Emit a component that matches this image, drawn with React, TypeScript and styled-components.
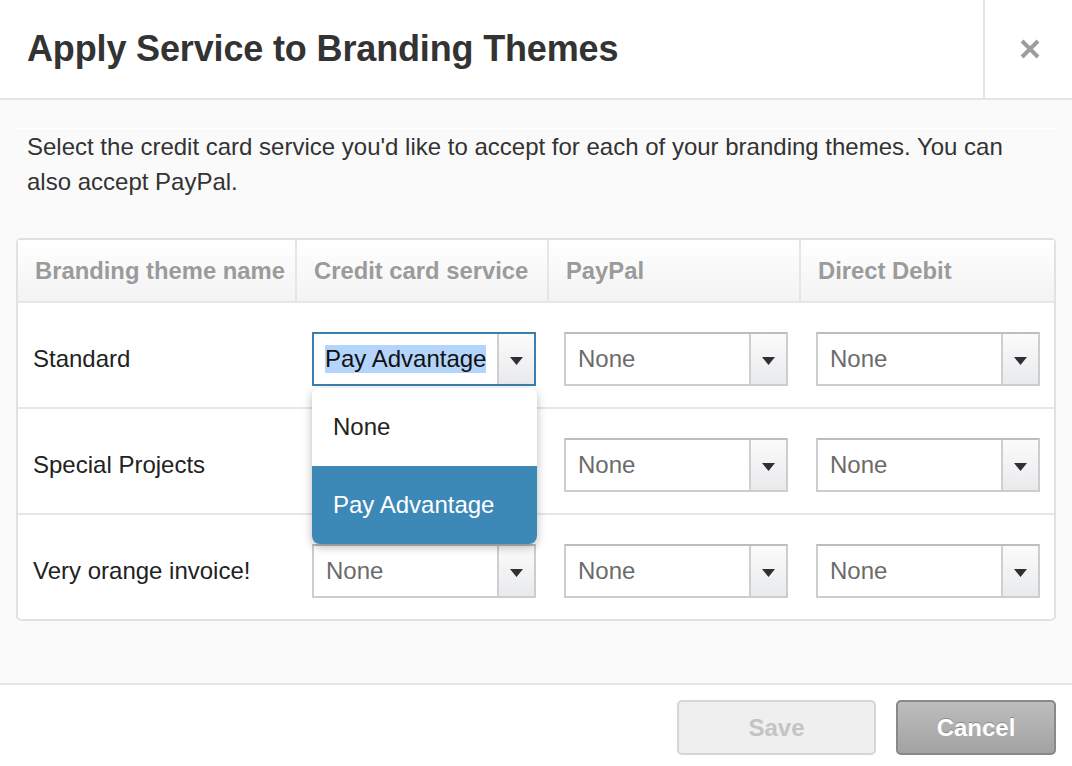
import React from "react";
import styled, { createGlobalStyle } from "styled-components";

const Global = createGlobalStyle`
  html, body { margin: 0; padding: 0; background: #ffffff; }
  body { font-family: "Liberation Sans", Arial, Helvetica, sans-serif; }
  * { box-sizing: border-box; }
`;

const Modal = styled.div`
  width: 1072px;
  height: 766px;
  display: flex;
  flex-direction: column;
  background: #fafafa;
`;

const Header = styled.div`
  height: 100px;
  display: flex;
  background: #fff;
  border-bottom: 2px solid #e4e4e4;
`;

const Title = styled.h1`
  flex: 1;
  margin: 0;
  padding: 0 0 0 27px;
  font-size: 36px;
  font-weight: 700;
  color: #333;
  line-height: 98px;
  letter-spacing: -0.15px;
`;

const CloseCell = styled.div`
  width: 89px;
  border-left: 2px solid #e4e4e4;
  display: flex;
  align-items: center;
  justify-content: center;
  padding-left: 2px;
`;

const Body = styled.div`
  flex: 1;
  padding: 28px 16px 0 16px;
`;

const Description = styled.p`
  margin: 0 0 39px 0;
  padding: 0 40px 0 11px;
  border-top: 1px solid #ffffff;
  font-size: 24px;
  line-height: 35px;
  color: #333;
`;

const TableBox = styled.div`
  border: 2px solid #e1e1e1;
  border-radius: 5px;
  background: #fff;
`;

const Grid = styled.div`
  display: grid;
  grid-template-columns: 279px 252px 252px 1fr;
`;

const HeadCell = styled.div<{ $last?: boolean }>`
  height: 63px;
  display: flex;
  align-items: center;
  padding: 0 0 0 17px;
  background: linear-gradient(#ffffff, #f3f3f3);
  border-bottom: 2px solid #e6e6e6;
  border-right: ${(p) => (p.$last ? "none" : "2px solid #e6e6e6")};
  font-size: 23.8px;
  font-weight: 700;
  color: #9b9b9b;
  white-space: nowrap;
`;

const Cell = styled.div<{ $last?: boolean }>`
  position: relative;
  height: ${(p) => (p.$last ? "104px" : "106px")};
  display: flex;
  align-items: center;
  padding: 8px 0 0 15px;
  border-bottom: ${(p) => (p.$last ? "none" : "2px solid #e6e6e6")};
  font-size: 24px;
  color: #222;
`;

const NameCell = styled(Cell)`
  padding-left: 15px;
`;

const SelectBox = styled.div<{ $focused?: boolean }>`
  width: 224px;
  height: 54px;
  display: flex;
  background: #fff;
  border: 2px solid ${(p) => (p.$focused ? "#3a7fad" : "#cdcdcd")};
  border-top-color: ${(p) => (p.$focused ? "#3a7fad" : "#bdbdbd")};
`;

const SelectText = styled.div<{ $focused?: boolean }>`
  flex: 1;
  display: flex;
  align-items: center;
  padding-left: ${(p) => (p.$focused ? "11px" : "12px")};
  font-size: 24px;
  color: ${(p) => (p.$focused ? "#111" : "#6b6b6b")};
`;

const Highlight = styled.span`
  background: #b4d4fc;
  line-height: 28px;
`;

const Arrow = styled.div`
  width: 37px;
  display: flex;
  align-items: center;
  justify-content: center;
  border-left: 2px solid #cfcfcf;
  background: linear-gradient(#fbfbfb, #e9eaec);
  padding-top: 4px;
`;

const Menu = styled.div`
  position: absolute;
  left: 15px;
  top: 85px;
  width: 225px;
  background: #fff;
  border-radius: 8px;
  box-shadow: 0 3px 10px rgba(0, 0, 0, 0.28);
  overflow: hidden;
  z-index: 5;
`;

const MenuItem = styled.div<{ $active?: boolean }>`
  height: 78px;
  display: flex;
  align-items: center;
  padding-left: 21px;
  font-size: 24px;
  color: ${(p) => (p.$active ? "#fff" : "#222")};
  background: ${(p) => (p.$active ? "#3c89b8" : "#fff")};
`;

const Footer = styled.div`
  height: 83px;
  background: #fff;
  border-top: 2px solid #e4e4e4;
  display: flex;
  justify-content: flex-end;
  align-items: flex-start;
  gap: 20px;
  padding: 15px 16px 0 0;
`;

const Button = styled.button<{ $primary?: boolean }>`
  height: 55px;
  width: ${(p) => (p.$primary ? "160px" : "199px")};
  border-radius: 5px;
  font-family: inherit;
  font-size: 24px;
  font-weight: 700;
  border: 2px solid ${(p) => (p.$primary ? "#898989" : "#d6d6d6")};
  color: ${(p) => (p.$primary ? "#fff" : "#c4c4c4")};
  background: ${(p) =>
    p.$primary ? "linear-gradient(#bdbdbd, #a2a2a2)" : "#efefef"};
  text-shadow: ${(p) => (p.$primary ? "0 -1px 0 rgba(0,0,0,0.25)" : "none")};
  padding: 0;
`;

const CloseIcon = () => (
  <svg width="22" height="20" viewBox="0 0 22 20">
    <path d="M3 2 L19 18 M19 2 L3 18" stroke="#9d9d9d" strokeWidth="4" strokeLinecap="butt" />
  </svg>
);

const Caret = () => (
  <svg width="13" height="8" viewBox="0 0 13 8">
    <path d="M0 0 H13 L6.5 8 Z" fill="#2f3033" />
  </svg>
);

type SelectProps = { value: string; focused?: boolean };

const Select = ({ value, focused }: SelectProps) => (
  <SelectBox $focused={focused}>
    <SelectText $focused={focused}>
      {focused ? <Highlight>{value}</Highlight> : value}
    </SelectText>
    <Arrow>
      <Caret />
    </Arrow>
  </SelectBox>
);

const rows = [
  { name: "Standard", card: "Pay Advantage", focused: true },
  { name: "Special Projects", card: "None" },
  { name: "Very orange invoice!", card: "None" },
];

export default function App() {
  return (
    <>
      <Global />
      <Modal>
        <Header>
          <Title>Apply Service to Branding Themes</Title>
          <CloseCell>
            <CloseIcon />
          </CloseCell>
        </Header>
        <Body>
          <Description>
            Select the credit card service you'd like to accept for each of your branding themes. You can
            also accept PayPal.
          </Description>
          <TableBox>
            <Grid>
              <HeadCell>Branding theme name</HeadCell>
              <HeadCell>Credit card service</HeadCell>
              <HeadCell>PayPal</HeadCell>
              <HeadCell $last>Direct Debit</HeadCell>
              {rows.map((r, i) => {
                const last = i === rows.length - 1;
                return (
                  <React.Fragment key={r.name}>
                    <NameCell $last={last}>{r.name}</NameCell>
                    <Cell $last={last}>
                      {r.focused ? (
                        <>
                          <Select value={r.card} focused />
                          <Menu>
                            <MenuItem>None</MenuItem>
                            <MenuItem $active>Pay Advantage</MenuItem>
                          </Menu>
                        </>
                      ) : (
                        <Select value={r.card} />
                      )}
                    </Cell>
                    <Cell $last={last}>
                      <Select value="None" />
                    </Cell>
                    <Cell $last={last}>
                      <Select value="None" />
                    </Cell>
                  </React.Fragment>
                );
              })}
            </Grid>
          </TableBox>
        </Body>
        <Footer>
          <Button disabled>Save</Button>
          <Button $primary>Cancel</Button>
        </Footer>
      </Modal>
    </>
  );
}
